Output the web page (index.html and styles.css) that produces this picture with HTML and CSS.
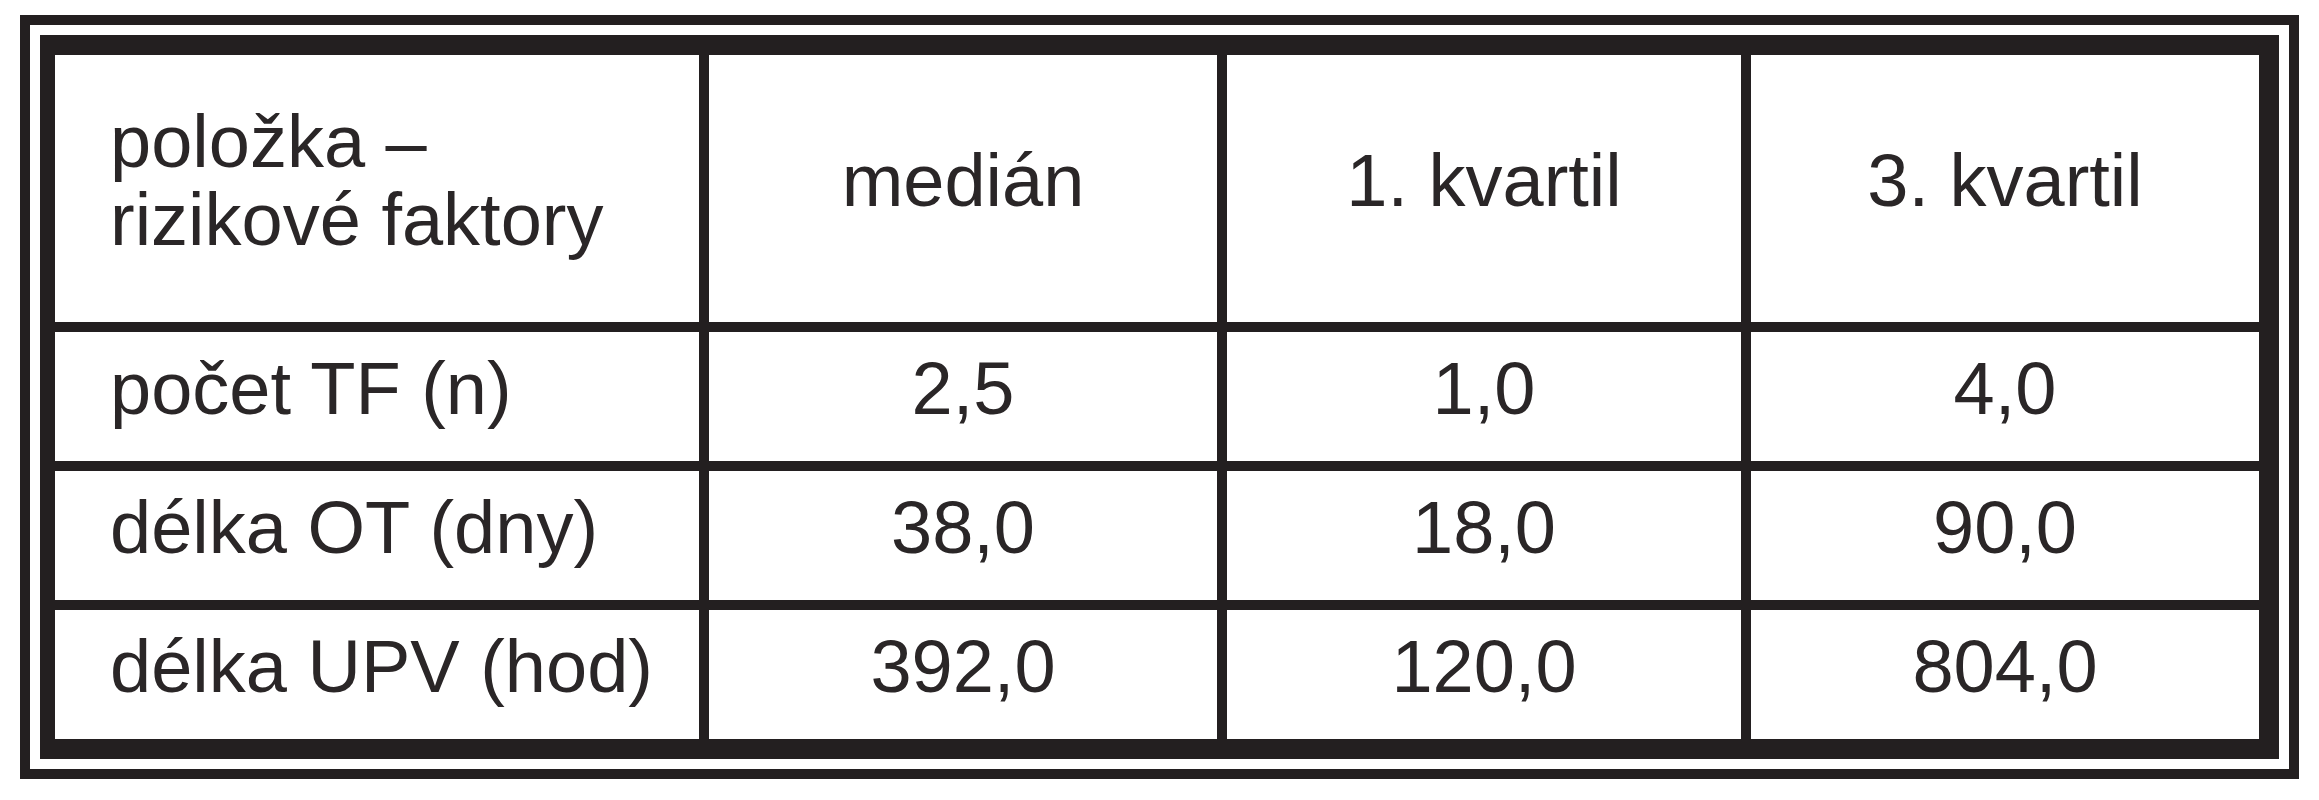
FILE: index.html
```html
<!DOCTYPE html>
<html lang="cs">
<head>
<meta charset="utf-8">
<title>Rizikové faktory</title>
<link rel="stylesheet" href="styles.css">
</head>
<body>
<div class="frame">
  <div class="pad">
    <div class="grid">
      <div class="cell first head2">položka –<br>rizikové faktory</div>
      <div class="cell">medián</div>
      <div class="cell">1. kvartil</div>
      <div class="cell">3. kvartil</div>

      <div class="cell first">počet TF (n)</div>
      <div class="cell">2,5</div>
      <div class="cell">1,0</div>
      <div class="cell">4,0</div>

      <div class="cell first">délka OT (dny)</div>
      <div class="cell">38,0</div>
      <div class="cell">18,0</div>
      <div class="cell">90,0</div>

      <div class="cell first">délka UPV (hod)</div>
      <div class="cell">392,0</div>
      <div class="cell">120,0</div>
      <div class="cell">804,0</div>
    </div>
  </div>
</div>
</body>
</html>
```
FILE: styles.css
```css
html, body {
  margin: 0;
  padding: 0;
  background: #ffffff;
}

body {
  padding: 15px 0 0 20px;
  font-family: "Liberation Sans", Arial, sans-serif;
  color: #231f20;
}

.frame {
  width: 2259px;
  border: 10px solid #231f20;
  background: #ffffff;
}

.pad {
  padding: 10px;
}

.grid {
  display: grid;
  grid-template-columns: 644px 508px 514px 508px;
  grid-template-rows: 267px 129px 129px 129px;
  gap: 10px;
  background: #231f20;
  border-style: solid;
  border-color: #231f20;
  border-width: 20px 20px 20px 15px;
}

.cell {
  background: #ffffff;
  display: flex;
  align-items: center;
  justify-content: center;
  text-align: center;
  font-size: 74px;
  line-height: 85px;
  padding-bottom: 16px;
  box-sizing: border-box;
  white-space: nowrap;
  color: #2a2627;
}

.first {
  justify-content: flex-start;
  text-align: left;
  padding-left: 55px;
}

.head2 {
  line-height: 78px;
}
```
